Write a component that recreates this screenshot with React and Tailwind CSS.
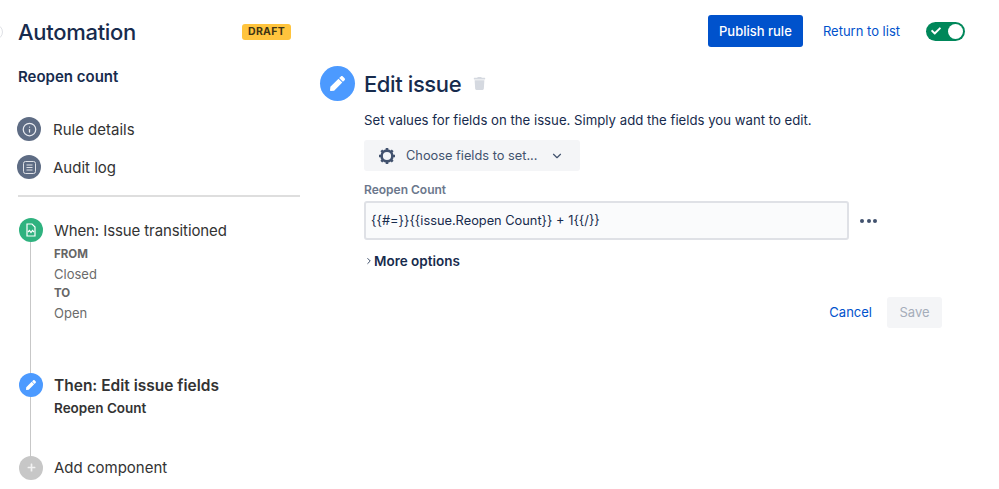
import React from "react";
import { FaPen, FaTrash, FaCheck, FaPlus } from "react-icons/fa";
import { FiChevronDown, FiChevronRight, FiInfo } from "react-icons/fi";

function NavItem({ label, children }) {
  return (
    <div className="flex h-[38px] items-center gap-3">
      <span className="flex h-6 w-6 items-center justify-center rounded-full bg-[#5e6c84] text-[#e9ebf0]">{children}</span>
      <span className="pt-[2px] text-[15px] text-[#333]">{label}</span>
    </div>
  );
}

function AuditIcon() {
  return (
    <svg width="15" height="15" viewBox="0 0 15 15" fill="none" stroke="#dfe1e6" strokeWidth="1">
      <rect x="1.5" y="1.5" width="12" height="12" rx="2" />
      <path d="M4.5 5h6M4.5 7.5h6M4.5 10h6" />
    </svg>
  );
}

function TriggerIcon() {
  return (
    <svg width="12" height="14" viewBox="0 0 12 14" fill="none" stroke="#fff" strokeWidth="1.2">
      <path d="M2 1h5l3 3v9H2z" fill="#2fb27f" />
      <path d="M3 9l1.5-1.5L6 9.5l1.5-2L9 9" />
    </svg>
  );
}

function GearIcon() {
  return (
    <svg width="18" height="18" viewBox="0 0 18 18" fill="none" stroke="#42526e">
      <circle cx="9" cy="9" r="5.4" strokeWidth="2.6" />
      <path d="M9 1v2M9 15v2M1 9h2M15 9h2M3.3 3.3l1.5 1.5M13.2 13.2l1.5 1.5M3.3 14.7l1.5-1.5M13.2 4.8l1.5-1.5" strokeWidth="2.6" />
    </svg>
  );
}

export default function App() {
  return (
    <div className="relative flex h-[489px] w-[999px] overflow-hidden bg-white font-['Inter',sans-serif] text-[#172b4d]">
      <span className="absolute left-[-13px] top-[24px] h-[16px] w-[16px] rounded-full border border-[#dfe1e6]" />

      {/* sidebar */}
      <aside className="w-[320px] shrink-0 pl-[18px] pr-5">
        <div className="flex h-[64px] items-center justify-between pr-[9px]">
          <h1 className="text-[22px] font-medium leading-none tracking-[-0.3px]">Automation</h1>
          <span className="rounded-[3px] bg-[#ffc43d] px-[6px] py-[1px] text-[10.5px] font-bold leading-[14px] tracking-[0.3px] text-[#403414]">DRAFT</span>
        </div>
        <p className="mt-[4px] text-[15px] font-semibold leading-[18px]">Reopen count</p>
        <div className="-ml-[1px] mt-[24px]">
          <NavItem label="Rule details"><FiInfo size={15} /></NavItem>
          <NavItem label="Audit log"><AuditIcon /></NavItem>
        </div>
        <div className="mt-[9px] h-[2px] bg-[#dedede]" />

        <div className="relative ml-[1px] mt-[20px]">
          <span className="absolute left-[11px] top-[12px] h-[230px] w-[1px] bg-[#c7c7c7]" />
          <div className="relative flex h-[25px] items-center gap-[11px]">
            <span className="flex h-6 w-6 items-center justify-center rounded-full bg-[#2fb27f]"><TriggerIcon /></span>
            <span className="pt-[3px] text-[15px] tracking-[-0.1px] text-[#333]">When: Issue transitioned</span>
          </div>
          <div className="ml-[35px] flex h-[130px] flex-col pt-[3px] text-[13px] leading-[19.5px] text-[#6b6b6b]">
            <span className="text-[11.5px] font-bold text-[#666]">FROM</span>
            <span>Closed</span>
            <span className="text-[11.5px] font-bold text-[#666]">TO</span>
            <span>Open</span>
          </div>
          <div className="relative flex h-[25px] items-center gap-[11px]">
            <span className="flex h-6 w-6 items-center justify-center rounded-full bg-[#4c9aff] text-white"><FaPen size={10} /></span>
            <span className="pt-[2px] text-[15.5px] font-semibold text-[#333]">Then: Edit issue fields</span>
          </div>
          <p className="ml-[35px] mt-[1px] text-[13.5px] font-semibold leading-[20px] text-[#333]">Reopen Count</p>
          <div className="relative mt-[37px] flex h-[25px] items-center gap-[11px]">
            <span className="flex h-6 w-6 items-center justify-center rounded-full bg-[#c7c7c7] text-[#f2f2f2]"><FaPlus size={9} /></span>
            <span className="pt-[2px] text-[15px] text-[#333]">Add component</span>
          </div>
        </div>
      </aside>

      {/* main panel */}
      <main className="flex-1 pr-[34px]">
        <div className="flex h-[62px] items-center justify-end">
          <button className="h-[32px] w-[95px] rounded-[3px] bg-[#0052cc] pt-[1px] text-[13px] font-medium text-white">Publish rule</button>
          <a className="ml-[20px] pt-[2px] text-[13px] text-[#0052cc]">Return to list</a>
          <span className="ml-[26px] flex h-[19px] w-[39px] items-center justify-between rounded-full bg-[#00875a] pl-[5px] pr-[2px] text-white">
            <FaCheck size={10} />
            <span className="h-[15px] w-[15px] rounded-full bg-white" />
          </span>
        </div>

        <div className="mt-[4px] flex h-[35px] items-center">
          <span className="flex h-[35px] w-[35px] items-center justify-center rounded-full bg-[#4c9aff] text-white"><FaPen size={15} /></span>
          <h2 className="ml-[9px] pt-[2px] text-[22px] font-medium tracking-[-0.4px]">Edit issue</h2>
          <FaTrash size={13} className="ml-[12px] text-[#d5d9e0]" />
        </div>

        <div className="pl-[44px] pr-[23px]">
          <p className="mt-[9px] whitespace-nowrap text-[13.2px] leading-[20px]">Set values for fields on the issue. Simply add the fields you want to edit.</p>
          <button className="mt-[10px] flex h-[31px] w-[216px] items-center rounded-[3px] bg-[#f4f5f7] pl-[14px] text-[12.8px] text-[#42526e]">
            <GearIcon />
            <span className="ml-[10px]">Choose fields to set...</span>
            <FiChevronDown size={14} className="ml-[13px]" />
          </button>
          <label className="mt-[12px] block text-[12px] font-semibold leading-[14px] text-[#6b778c]">Reopen Count</label>
          <div className="mt-[4px] flex items-center">
            <div className="flex h-[39px] w-[485px] shrink-0 items-center rounded-[3px] border-2 border-[#dfe1e6] bg-[#fafbfc] pl-[5px] text-[12.8px]">{"{{#=}}{{issue.Reopen Count}} + 1{{/}}"}</div>
            <span className="ml-[11px] flex gap-[2.5px]">
              <i className="h-1 w-1 rounded-full bg-[#42526e]" />
              <i className="h-1 w-1 rounded-full bg-[#42526e]" />
              <i className="h-1 w-1 rounded-full bg-[#42526e]" />
            </span>
          </div>
          <div className="mt-[12px] flex h-[18px] items-center">
            <FiChevronRight size={10} className="text-[#172b4d]" />
            <span className="text-[13.5px] font-semibold">More options</span>
          </div>
          <div className="mt-[27px] flex items-center justify-end">
            <a className="text-[13px] text-[#0052cc]">Cancel</a>
            <button className="ml-[15px] h-[31px] w-[55px] rounded-[3px] bg-[#f4f5f7] text-[13px] text-[#a5adba]">Save</button>
          </div>
        </div>
      </main>
    </div>
  );
}
